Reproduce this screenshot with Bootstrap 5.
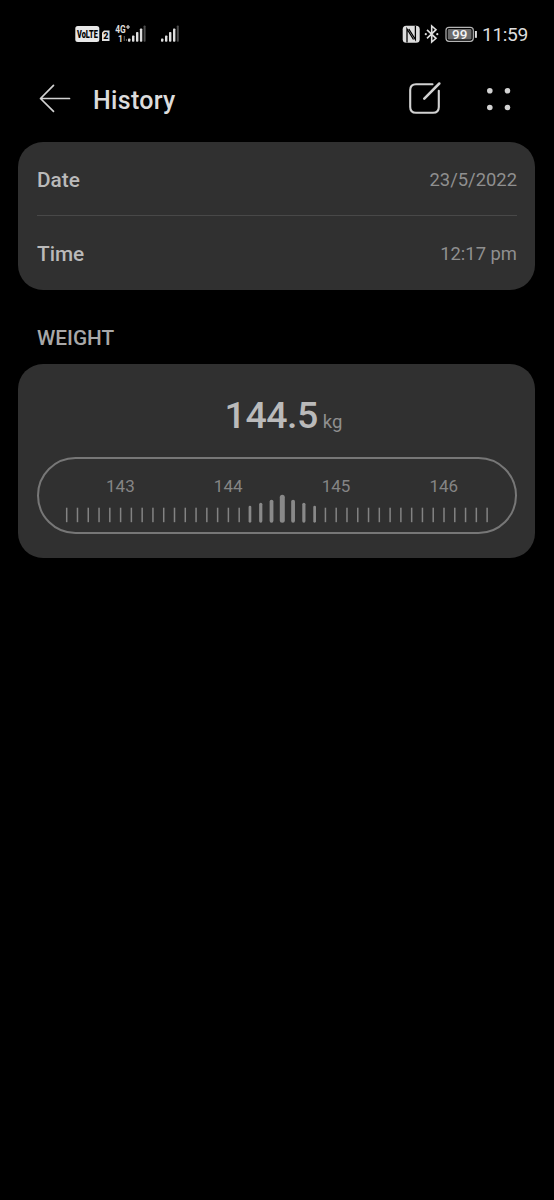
<!DOCTYPE html>
<html lang="en">
<head>
<meta charset="utf-8">
<meta name="viewport" content="width=device-width, initial-scale=1">
<title>History</title>
<link rel="stylesheet" href="https://cdn.jsdelivr.net/npm/bootstrap@5.3.0/dist/css/bootstrap.min.css">
<style>
body{background:#000;font-family:Roboto,sans-serif;color:#b8b8b8;min-height:1200px;line-height:1.2}
svg{display:block;flex:none}
svg text{font-family:Roboto,sans-serif}
.status{height:68px;padding:0 26px 0 75px}
.clock{font-size:19.2px;letter-spacing:-.4px;color:#dedede;line-height:22px;margin:2px 0 0 4px;width:46px;white-space:nowrap}
.topbar{height:62px;padding:0 42px 0 39px}
.title{font-size:25px;letter-spacing:.3px;font-weight:500;color:#dcdcdc;line-height:30px;margin:3px 0 0 22px}
.panel{background:#303030;border-radius:25px;margin:0 19px 0 18px;padding:0 18px 0 19px}
.item{height:75px;padding-top:3px}
.item+.item{border-top:1px solid #484848}
.item:first-child{height:73px}
.item-name{font-size:20.8px;font-weight:500;color:#bababa}
.item-value{font-size:18.4px;color:#8f8f8f}
.section{font-size:20.8px;font-weight:500;color:#a8a8a8;line-height:24px;margin:36px 37px 14px}
.reading{height:93px;padding:28px 0 0 13px}
.num{font-size:37.5px;letter-spacing:-.5px;font-weight:500;color:#bababa;line-height:46px}
.unit{font-size:18.5px;color:#8f8f8f;margin-left:5px}
.gauge{height:77px;border:2px solid #777;border-radius:39px;padding:17px 17px 0 27.5px}
.scale-label{width:107.8px;font-size:17px;line-height:20px;color:#858585}
</style>
</head>
<body>
<header>
  <div class="status d-flex justify-content-between align-items-center">
    <svg width="108" height="24" viewBox="75 22 108 24">
      <rect x="75.3" y="26" width="24" height="16" rx="2.5" fill="#e8e8e8"/>
      <text transform="translate(77 38.3) scale(.67 1)" font-size="11" font-weight="900" fill="#000">VoLTE</text>
      <path d="M102 32.5 L104 30.5 H109.5 V41 H102Z" fill="#e0e0e0"/>
      <text x="103.2" y="39.3" font-size="9" font-weight="900" fill="#000">2</text>
      <text transform="translate(115.3 33.3) scale(.8 1)" font-size="10.5" font-weight="700" fill="#ddd">4G</text>
      <path d="M126 27H130M128 25V29" stroke="#ddd" stroke-width="1.2"/>
      <text x="118" y="42" font-size="8.5" font-weight="700" fill="#ddd">1</text>
      <path d="M124.3 36V41M126.5 39V41" stroke="#555" stroke-width="1.2"/>
      <g fill="#dedede">
        <rect x="128" y="38.5" width="2.4" height="3.3" rx=".8"/><rect x="132" y="35.5" width="2.4" height="6.3" rx=".8"/><rect x="136" y="32" width="2.4" height="9.8" rx=".8"/><rect x="139.9" y="28.5" width="2.4" height="13.3" rx=".8"/>
        <rect x="161" y="38.5" width="2.4" height="3.3" rx=".8"/><rect x="165" y="35.5" width="2.4" height="6.3" rx=".8"/><rect x="169" y="32" width="2.4" height="9.8" rx=".8"/><rect x="173" y="28.5" width="2.4" height="13.3" rx=".8"/>
      </g>
      <g fill="#4c4c4c"><rect x="143.6" y="25.5" width="2" height="16.3" rx=".8"/><rect x="176.8" y="25.5" width="2" height="16.3" rx=".8"/></g>
    </svg>
    <div class="d-flex align-items-center">
      <svg width="76" height="24" viewBox="402 22 76 24">
        <rect x="402.7" y="25.7" width="17" height="17" rx="3.5" fill="#dedede"/>
        <path d="M407 42.5V29L413.5 39.5M415.4 26V39.5L408.8 29" fill="none" stroke="#000" stroke-width="1.3"/>
        <path d="M427 29.8L436 38.3L431.7 42V26L436 29.7L427 38.3" fill="none" stroke="#dedede" stroke-width="1.6"/>
        <circle cx="425.8" cy="34.2" r="1.1" fill="#ddd"/><circle cx="437.3" cy="34.2" r="1.1" fill="#ddd"/>
        <rect x="446" y="27.3" width="27.3" height="14" rx="3" fill="#000" stroke="#b4b4b4" stroke-width="1.2"/>
        <rect x="447.8" y="29.1" width="23.7" height="10.4" rx="1.3" fill="#6c6c6c"/>
        <path d="M475.9 31V37.8" stroke="#dedede" stroke-width="2"/>
        <text x="459.7" y="39" text-anchor="middle" font-size="13.5" font-weight="500" fill="#f4f4f4">99</text>
      </svg>
      <span class="clock">11:59</span>
    </div>
  </div>
  <nav class="topbar d-flex align-items-center">
    <svg width="32" height="30" viewBox="39 84 32 30" fill="none" stroke="#d2d2d2" stroke-width="1.7" stroke-linecap="round" stroke-linejoin="round"><path d="M69.5 98.5H40.5M53.5 85.3L40.5 98.5L53.5 111.3"/></svg>
    <h1 class="title">History</h1>
    <svg class="ms-auto" width="34" height="34" viewBox="408 82 34 34" fill="none" stroke="#d2d2d2" stroke-width="2.1" stroke-linecap="round"><path d="M432.5 84.2H416Q410.2 84.2 410.2 90V107Q410.2 112.8 416 112.8H433Q438.8 112.8 438.8 107V90.8"/><path d="M424.3 98.7L439.3 83.5" stroke-width="2.5"/></svg>
    <svg style="margin-left:43px" width="27" height="26" viewBox="485 85 27 26" fill="#d2d2d2"><circle cx="489.8" cy="89.8" r="2.8"/><circle cx="507.5" cy="89.8" r="2.8"/><circle cx="489.8" cy="106.5" r="2.8"/><circle cx="507.5" cy="106.5" r="2.8"/></svg>
  </nav>
</header>
<main>
  <section class="panel" style="margin-top:12px;height:148px">
    <div class="item d-flex justify-content-between align-items-center"><span class="item-name">Date</span><span class="item-value">23/5/2022</span></div>
    <div class="item d-flex justify-content-between align-items-center"><span class="item-name">Time</span><span class="item-value">12:17 pm</span></div>
  </section>
  <h2 class="section">WEIGHT</h2>
  <section class="panel" style="height:194px">
    <div class="reading d-flex justify-content-center align-items-baseline"><span class="num">144.5</span><span class="unit">kg</span></div>
    <div class="gauge">
      <div class="d-flex text-center"><span class="scale-label">143</span><span class="scale-label">144</span><span class="scale-label">145</span><span class="scale-label">146</span></div>
      <svg id="ticks" class="overflow-visible" width="431" height="32"></svg>
    </div>
  </section>
</main>
<script src="https://cdn.jsdelivr.net/npm/bootstrap@5.3.0/dist/js/bootstrap.bundle.min.js"></script>
<script>
// One tick per 0.1 kg; ticks grow taller and thicker around the reading.
const heights = [28, 23, 20, 17], widths = [5, 3.8, 3.2, 2.7];
const count = 40, current = 20, step = 10.78, base = 26.7;
let marks = '';
for (let i = 0; i < count; i++) {
  const d = Math.abs(i - current), near = d < 4;
  const w = near ? widths[d] : 1.5, h = near ? heights[d] : 15;
  marks += `<rect x="${(i * step - w / 2 - 0.3).toFixed(2)}" y="${base - h}" width="${w}" height="${near ? h : h - 0.5}" rx="${near ? w / 2 : 0}" fill="${near ? '#898989' : '#838383'}"/>`;
}
document.getElementById('ticks').innerHTML = marks;
</script>
</body>
</html>
